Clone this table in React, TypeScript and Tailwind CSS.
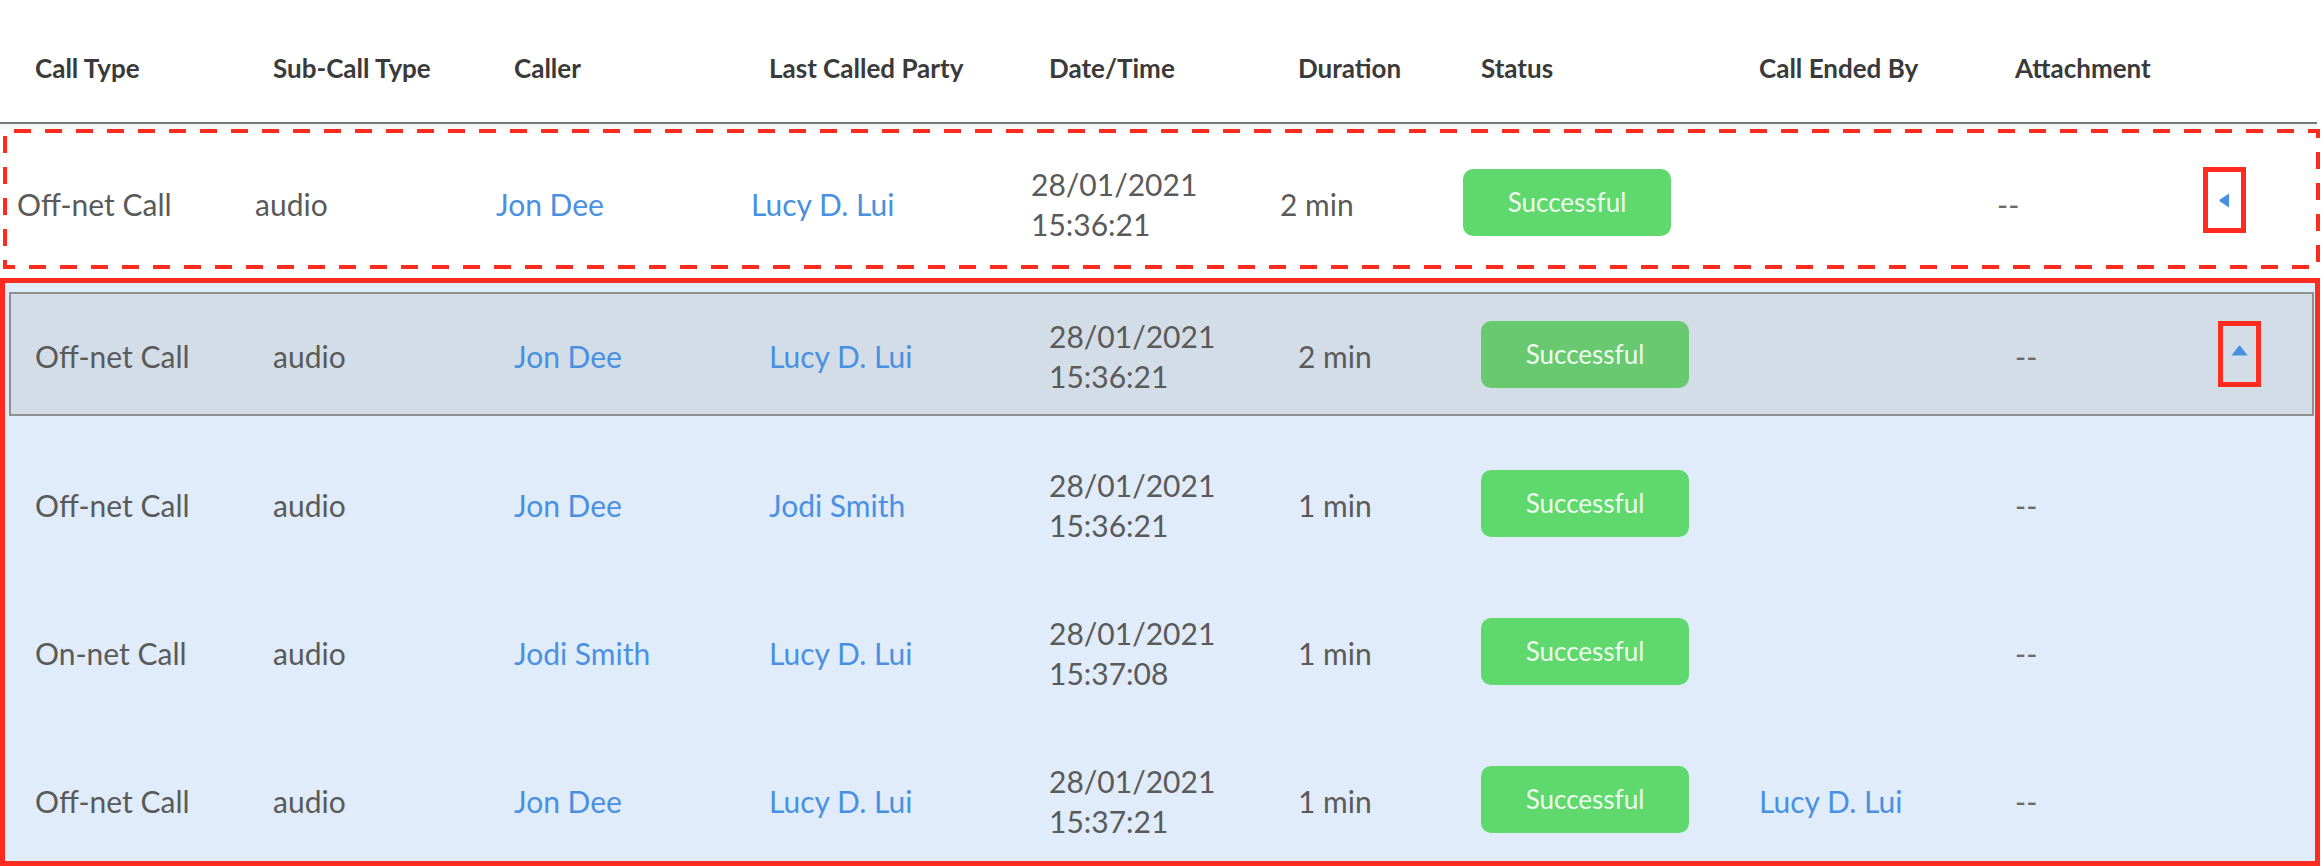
import React from 'react';

type CallRow = {
  callType: string;
  subType: string;
  caller: string;
  lastParty: string;
  date: string;
  time: string;
  duration: string;
  endedBy?: string;
  attachment: string;
};

const rows: CallRow[] = [
  { callType: 'Off-net Call', subType: 'audio', caller: 'Jon Dee', lastParty: 'Jodi Smith', date: '28/01/2021', time: '15:36:21', duration: '1 min', attachment: '--' },
  { callType: 'On-net Call', subType: 'audio', caller: 'Jodi Smith', lastParty: 'Lucy D. Lui', date: '28/01/2021', time: '15:37:08', duration: '1 min', attachment: '--' },
  { callType: 'Off-net Call', subType: 'audio', caller: 'Jon Dee', lastParty: 'Lucy D. Lui', date: '28/01/2021', time: '15:37:21', duration: '1 min', endedBy: 'Lucy D. Lui', attachment: '--' },
];

const parent: CallRow = {
  callType: 'Off-net Call', subType: 'audio', caller: 'Jon Dee', lastParty: 'Lucy D. Lui', date: '28/01/2021', time: '15:36:21', duration: '2 min', attachment: '--',
};

const headers = ['Call Type', 'Sub-Call Type', 'Caller', 'Last Called Party', 'Date/Time', 'Duration', 'Status', 'Call Ended By', 'Attachment', ''];

const grid = 'grid grid-cols-[238px_241px_255px_280px_249px_183px_278px_256px_203px_60px]';

const Cells = ({ row, badge }: { row: CallRow; badge: string }) => (
  <>
    <div className="pt-[4px]">{row.callType}</div>
    <div className="pt-[4px]">{row.subType}</div>
    <div className="pt-[4px] text-[#4a90e2]">{row.caller}</div>
    <div className="pt-[4px] text-[#4a90e2]">{row.lastParty}</div>
    <div className="pt-[4px]">
      {row.date}
      <br />
      {row.time}
    </div>
    <div className="pt-[4px]">{row.duration}</div>
    <div>
      <div className={`flex h-[67px] w-[208px] items-center justify-center rounded-[10px] text-[26px] text-[#eefcec] ${badge}`}>
        Successful
      </div>
    </div>
    <div className="pt-[4px] text-[#4a90e2]">{row.endedBy ?? ''}</div>
    <div className="pt-[4px] text-[#6a6a6a]">{row.attachment}</div>
  </>
);

const ToggleBox = ({ dir, className }: { dir: 'left' | 'up'; className: string }) => (
  <div className={`flex h-[66px] w-[43px] items-center justify-center border-[5px] border-[#ff2b1f] ${className}`}>
    {dir === 'left' ? (
      <svg width="11" height="15" viewBox="0 0 11 15">
        <path d="M10 0.5 L10 14.5 L1 8.6 Q0 7.5 1 6.4 Z" fill="#4a8fdf" />
      </svg>
    ) : (
      <svg width="17" height="11" viewBox="0 0 17 11" className="-mt-[7px]">
        <path d="M0.5 10.5 L16.5 10.5 L9.4 1 Q8.5 0 7.6 1 Z" fill="#4a8fdf" />
      </svg>
    )}
  </div>
);

export default function App() {
  return (
    <div className="h-[866px] w-[2324px] overflow-hidden bg-white font-['Lato','Noto_Sans',sans-serif] text-[30px] leading-[40px] text-[#5a5a5a]">
      {/* header */}
      <div className={`${grid} h-[124px] w-[2317px] border-b-2 border-[#727b7c] pl-[35px] pt-[55px] text-[26px] font-bold leading-[26px] text-[#3a3a3a]`}>
        {headers.map((h, i) => (
          <div key={i} className="whitespace-nowrap">{h}</div>
        ))}
      </div>
      <div className="h-[5px] w-[2317px] bg-[#f4f5f5]" />

      {/* parent row, dashed annotation */}
      <div className="relative ml-[3px] h-[140px] w-[2317px]">
        <svg className="pointer-events-none absolute inset-0" width="2317" height="140">
          <rect x="2" y="2" width="2313" height="136" fill="none" stroke="#ff2b1f" strokeWidth="4" strokeDasharray="17 14" strokeDashoffset="22" />
        </svg>
        <div className={`${grid} h-full items-center pl-[14px] pt-[6px]`}>
          <Cells row={parent} badge="bg-[#5fd86d]" />
          <ToggleBox dir="left" className="ml-[3px] -mt-[4px] w-[42px]" />
        </div>
      </div>

      {/* expanded group */}
      <div className="mt-[9px] h-[588px] w-[2320px] overflow-hidden border-[5px] border-[#ff2b1f] bg-[#e0ecf9]">
        <div className="pb-[13px] pl-[4px] pr-[1px] pt-[9px]">
          <div className={`${grid} h-[124px] items-center border-2 border-[#8f8f8f] bg-[#d3dde7] pl-[24px]`}>
            <Cells row={parent} badge="bg-[#68c971]" />
            <ToggleBox dir="up" className="" />
          </div>
        </div>
        {rows.map((r, i) => (
          <div key={i} className={`${grid} h-[148px] shrink-0 items-center pl-[30px]`}>
            <Cells row={r} badge="bg-[#5fd86d]" />
          </div>
        ))}
      </div>
    </div>
  );
}
